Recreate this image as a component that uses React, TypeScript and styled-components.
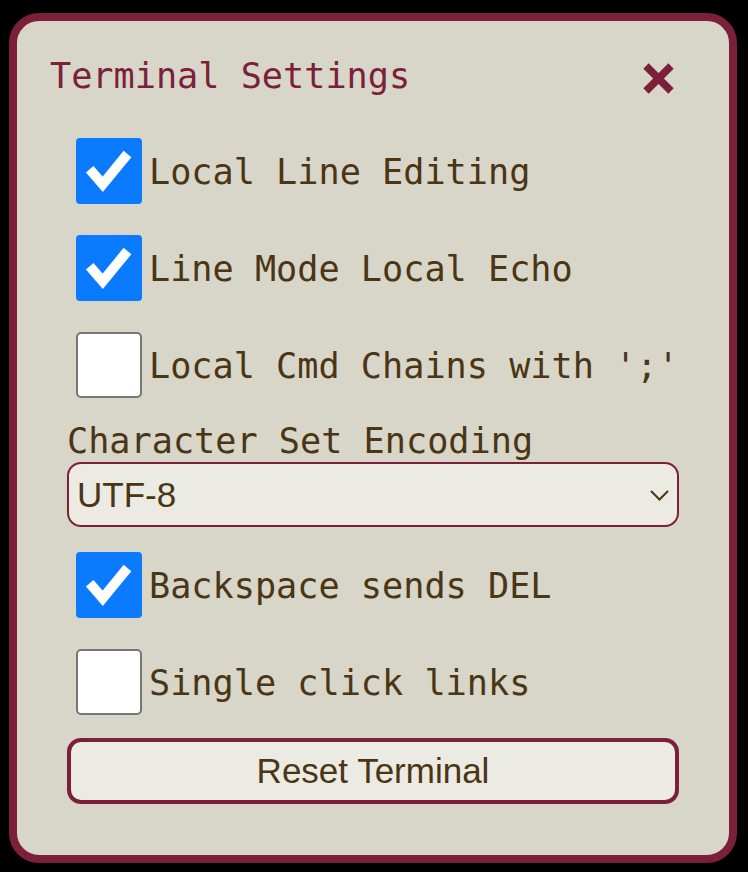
import React, { useState } from 'react';
import styled, { createGlobalStyle } from 'styled-components';

const GlobalStyle = createGlobalStyle`
  html, body {
    margin: 0;
    padding: 0;
    background: #000;
  }
  * {
    box-sizing: border-box;
  }
`;

const Page = styled.div`
  padding: 13px 11px 9px 9px;
  background: #000;
  min-height: 872px;
`;

const Panel = styled.div`
  height: 850px;
  background: #d8d6c8;
  border: 8px solid #7b1f3a;
  border-radius: 30px;
  padding: 34px 50px 0 50px;
  display: flex;
  flex-direction: column;
  font-family: "DejaVu Sans Mono", monospace;
  color: #4a3515;
`;

const Header = styled.div`
  display: flex;
  justify-content: space-between;
  align-items: center;
  margin-left: -17px;
  margin-right: 5px;
`;

const Title = styled.h1`
  margin: 0;
  font-size: 35.2px;
  font-weight: normal;
  color: #7b1f3a;
  line-height: normal;
`;

const CloseButton = styled.button`
  border: 0;
  padding: 0;
  margin-top: 5px;
  background: none;
  width: 31px;
  height: 31px;
  display: flex;
  cursor: pointer;
`;

const Row = styled.label`
  display: flex;
  align-items: center;
  margin-left: 9px;
  font-size: 35.2px;
  cursor: pointer;
  & + & {
    margin-top: 31px;
  }
`;

const FirstRows = styled.div`
  margin-top: 42px;
  display: flex;
  flex-direction: column;
`;

const LowerRows = styled.div`
  margin-top: 25px;
  display: flex;
  flex-direction: column;
`;

const Box = styled.span<{ $checked: boolean }>`
  width: 66px;
  height: 66px;
  flex: none;
  border-radius: ${p => (p.$checked ? '4px' : '5px')};
  background: ${p => (p.$checked ? '#0a7aff' : '#fff')};
  border: ${p => (p.$checked ? 'none' : '2px solid #767676')};
  display: flex;
`;

const LabelText = styled.span`
  margin-left: 7px;
  white-space: pre;
`;

const FieldLabel = styled.div`
  margin-top: 22px;
  font-size: 35.2px;
  line-height: normal;
`;

const SelectWrap = styled.div`
  position: relative;
  margin-top: 1px;
`;

const Select = styled.select`
  appearance: none;
  width: 100%;
  height: 65px;
  border: 2px solid #7b1f3a;
  border-radius: 14px;
  background: #ebeae3;
  color: #4a3515;
  font-family: "Liberation Sans", Arial, sans-serif;
  font-size: 35px;
  padding: 0 40px 0 8px;
  outline: none;
`;

const Chevron = styled.svg`
  position: absolute;
  right: 10px;
  top: 28px;
  pointer-events: none;
`;

const ResetButton = styled.button`
  margin-top: 23px;
  height: 66px;
  width: 100%;
  border: 4px solid #7b1f3a;
  border-radius: 14px;
  background: #ebeae3;
  color: #4a3515;
  font-family: "Liberation Sans", Arial, sans-serif;
  font-size: 35px;
  cursor: pointer;
`;

const CheckMark = () => (
  <svg width="66" height="66" viewBox="0 0 66 66">
    <polyline
      points="13.7,31.3 26.7,46.3 51.5,16"
      fill="none"
      stroke="#fff"
      strokeWidth="10"
      strokeLinecap="butt"
      strokeLinejoin="miter"
    />
  </svg>
);

type Option = { key: string; label: string };

const Checkbox = ({ checked, label, onToggle }: { checked: boolean; label: string; onToggle: () => void }) => (
  <Row onClick={onToggle}>
    <Box $checked={checked}>{checked && <CheckMark />}</Box>
    <LabelText>{label}</LabelText>
  </Row>
);

const upper: Option[] = [
  { key: 'lineEdit', label: 'Local Line Editing' },
  { key: 'echo', label: 'Line Mode Local Echo' },
  { key: 'chains', label: "Local Cmd Chains with ';'" },
];

const lower: Option[] = [
  { key: 'bsDel', label: 'Backspace sends DEL' },
  { key: 'singleClick', label: 'Single click links' },
];

const TerminalSettings = () => {
  const [opts, setOpts] = useState<Record<string, boolean>>({
    lineEdit: true,
    echo: true,
    chains: false,
    bsDel: true,
    singleClick: false,
  });
  const [charset, setCharset] = useState('UTF-8');

  const toggle = (key: string) => setOpts(o => ({ ...o, [key]: !o[key] }));

  return (
    <Panel>
      <Header>
        <Title>Terminal Settings</Title>
        <CloseButton aria-label="Close">
          <svg width="31" height="31" viewBox="0 0 31 31">
            <path d="M3 3 L28 28 M28 3 L3 28" stroke="#7b1f3a" strokeWidth="7.5" />
          </svg>
        </CloseButton>
      </Header>
      <FirstRows>
        {upper.map(o => (
          <Checkbox key={o.key} checked={opts[o.key]} label={o.label} onToggle={() => toggle(o.key)} />
        ))}
      </FirstRows>
      <FieldLabel>Character Set Encoding</FieldLabel>
      <SelectWrap>
        <Select value={charset} onChange={e => setCharset(e.target.value)}>
          <option>UTF-8</option>
          <option>ISO-8859-1</option>
          <option>ASCII</option>
        </Select>
        <Chevron width="19" height="11" viewBox="0 0 19 11">
          <polyline points="1,1 9.5,9.5 18,1" fill="none" stroke="#4a3515" strokeWidth="2" />
        </Chevron>
      </SelectWrap>
      <LowerRows>
        {lower.map(o => (
          <Checkbox key={o.key} checked={opts[o.key]} label={o.label} onToggle={() => toggle(o.key)} />
        ))}
      </LowerRows>
      <ResetButton>Reset Terminal</ResetButton>
    </Panel>
  );
};

const App = () => (
  <Page>
    <GlobalStyle />
    <TerminalSettings />
  </Page>
);

export default App;
